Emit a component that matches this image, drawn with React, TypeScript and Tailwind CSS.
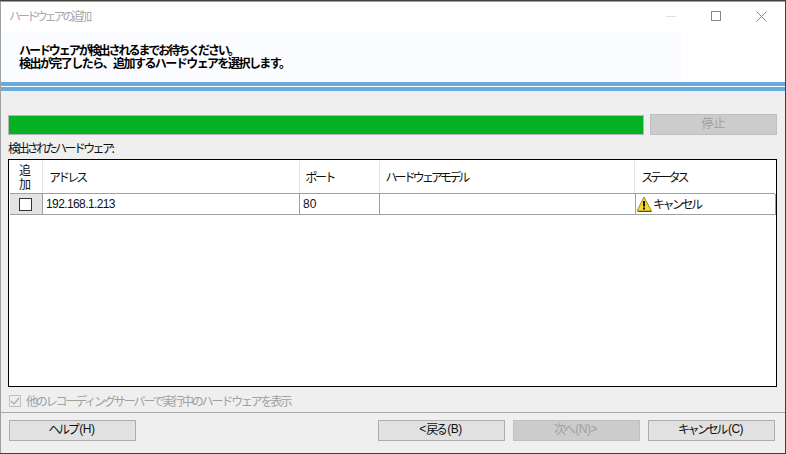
import React from 'react';

const WarningIcon: React.FC = () => (
    <svg width="16" height="16" viewBox="0 0 16 16" className="shrink-0">
        <path d="M8 1 L15.5 15 L1 15 Z" fill="#f8dc20" stroke="#a08a30" strokeWidth="1" strokeLinejoin="round" />
        <path d="M2 15.5 H15.5" stroke="#3a4a8a" strokeWidth="1" />
        <rect x="7" y="5" width="2" height="5.5" fill="#111" />
        <rect x="7" y="11.5" width="2" height="2" fill="#111" />
    </svg>
);

const ActionButton: React.FC<{ before?: string; label: string; after: string; disabled?: boolean }> = ({ before, label, after, disabled }) => (
    <div className={`w-[127px] h-[21px] flex items-center justify-center border text-[12px] pb-[3px] pr-[2px] ${disabled ? 'bg-[#cccccc] border-[#bfbfbf] text-[#a0a0a0]' : 'bg-[#e1e1e1] border-[#adadad] text-[#111111]'}`}>
        {before && <span className="font-['Liberation_Sans',sans-serif]">{before}</span>}
        <span className="tracking-[-2.4px]">{label}</span>
        <span className="ml-[2px] font-['Liberation_Sans',sans-serif] tracking-[-0.5px]">{after}</span>
    </div>
);

export default function App() {
    return (
        <div className="w-[786px] h-[454px] bg-[#40403c] pt-px pb-px font-['Noto_Sans_CJK_JP',sans-serif] overflow-hidden">
            <div className="h-[452px] w-[785px] flex flex-col bg-[#efefef] border-l border-t border-[#a0a0a0]">
                <div className="h-[30px] shrink-0 bg-white flex items-center justify-between pl-2 pr-[18px] pb-[2px] text-[12px] text-[#a8a8a8]">
                    <span className="tracking-[-3.1px]">ハードウェアの追加</span>
                    <div className="flex items-center gap-[35px]">
                        <div className="w-[10px] h-px bg-[#e0e0e0]" />
                        <div className="w-[10px] h-[10px] border border-[#8a8a8a]" />
                        <svg width="11" height="11" viewBox="0 0 11 11">
                            <path d="M0.5 0.5 L10.5 10.5 M10.5 0.5 L0.5 10.5" stroke="#8a8a8a" strokeWidth="1" />
                        </svg>
                    </div>
                </div>
                <div className="h-[50px] shrink-0 bg-white">
                    <div className="h-full w-[680px] bg-[#fbfcff] pl-[18px] pt-[11px] text-[12px] leading-[13px] font-bold text-black">
                        <div className="tracking-[-2.05px]">ハードウェアが検出されるまでお待ちください。</div>
                        <div className="tracking-[-1.55px]">検出が完了したら、追加するハードウェアを選択します。</div>
                    </div>
                </div>
                <div className="h-[4px] shrink-0 bg-[#66acdf]" />
                <div className="h-px shrink-0 bg-white" />
                <div className="h-[4px] shrink-0 bg-[#66acdf]" />

                <div className="flex-1 flex flex-col pl-[7px] pr-[8px]">
                    <div className="flex items-end justify-between mt-[23px] h-[21px]">
                        <div className="w-[636px] h-[20px] border border-[#b4b4b4] bg-[#05b025]" />
                        <div className="w-[127px] h-[21px] flex items-center justify-center bg-[#cccccc] border border-[#bfbfbf] text-[#a0a0a0] text-[12px] pb-[3px]">停止</div>
                    </div>
                    <div className="mt-[5px] h-[19px] text-[12px] leading-[16px] text-[#111111] tracking-[-2.6px]">検出されたハードウェア:</div>
                    <div className="w-[769px] h-[228px] border border-black p-px bg-white text-[12px] text-[#111111]">
                        <div className="flex h-[33px] border-b border-[#a0a0a0]">
                            <div className="w-[33px] flex items-center justify-center text-center leading-[14px] pr-[2px] border-r border-[#e5e5e5]">追<br />加</div>
                            <div className="w-[257px] pl-[6px] flex items-center border-r border-[#e5e5e5] tracking-[-2.9px]">アドレス</div>
                            <div className="w-[80px] pl-[6px] flex items-center border-r border-[#e5e5e5] tracking-[-2.6px]">ポート</div>
                            <div className="w-[256px] pl-[6px] flex items-center border-r border-[#e5e5e5] tracking-[-2.9px]">ハードウェアモデル</div>
                            <div className="w-[140px] pl-[6px] flex items-center tracking-[-2.9px]">ステータス</div>
                        </div>
                        <div className="flex h-[21px] w-[766px] border-b border-[#a0a0a0]">
                            <div className="w-[33px] flex items-center justify-center pr-[2px] bg-[#e3e3e3] border-r border-[#a0a0a0]">
                                <div className="w-[13px] h-[13px] border border-[#333333] bg-white" />
                            </div>
                            <div className="w-[257px] pl-[3px] flex items-center border-r border-[#a0a0a0] font-['Liberation_Sans',sans-serif] tracking-[-0.6px]">192.168.1.213</div>
                            <div className="w-[80px] pl-[3px] flex items-center border-r border-[#a0a0a0] font-['Liberation_Sans',sans-serif]">80</div>
                            <div className="w-[256px] border-r border-[#a0a0a0]" />
                            <div className="w-[140px] flex items-center gap-px border-r border-[#a0a0a0] tracking-[-2.5px]">
                                <WarningIcon />
                                <span>キャンセル</span>
                            </div>
                        </div>
                    </div>
                    <div className="flex items-center h-[22px] pl-[1px] mt-[3px] gap-[5px] text-[12px] text-[#a0a0a0] tracking-[-2.15px]">
                        <div className="w-[12px] h-[12px] border border-[#c0c0c0] flex items-center justify-center">
                            <svg width="10" height="10" viewBox="0 0 10 10">
                                <path d="M1 5 L4 8 L9 2" fill="none" stroke="#b0b0b0" strokeWidth="1.5" />
                            </svg>
                        </div>
                        <span>他のレコーディングサーバーで実行中のハードウェアを表示</span>
                    </div>
                </div>

                <div className="h-[43px] shrink-0 border-t border-[#a8a8a8] pt-[7px] pl-[8px] flex">
                    <ActionButton label="ヘルプ" after="(H)" />
                    <div className="ml-[242px] flex gap-[8px]">
                        <ActionButton before="<" label="戻る" after="(B)" />
                        <ActionButton label="次へ" after="(N)>" disabled />
                        <ActionButton label="キャンセル" after="(C)" />
                    </div>
                </div>
            </div>
        </div>
    );
}
